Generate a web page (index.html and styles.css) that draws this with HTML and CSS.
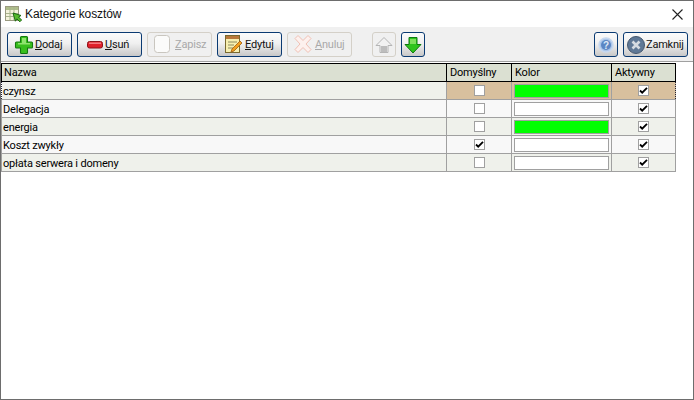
FILE: index.html
```html
<!DOCTYPE html>
<html lang="pl">
<head>
<meta charset="utf-8">
<title>Kategorie kosztów</title>
<link rel="stylesheet" href="styles.css">
</head>
<body>
<div class="window">
  <header class="titlebar">
    <svg class="app-icon" width="18" height="18" viewBox="0 0 18 18">
      <rect x="0.500" y="1.500" width="13" height="14" fill="#f4f2dc" stroke="#9a9a80"/>
      <rect x="1" y="2" width="12" height="3" fill="#aebd8a"/>
      <path d="M1 8.500h12M1 11.500h12M5 2v13M9 2v13" stroke="#a8b48e" fill="none"/>
      <path d="M8 8l8 2.500-2.400 1.500 3 3-1.800 1.800-3-3-1.400 2.400z" fill="#56bb2c" stroke="#1c6a12"/>
    </svg>
    <span class="title">Kategorie kosztów</span>
    <svg class="close" width="11" height="11" viewBox="0 0 11 11"><path d="M.500.500l10 10M10.500.500l-10 10" stroke="#222" stroke-width="1.100" fill="none"/></svg>
  </header>
  <div class="toolbar">
    <button class="btn wide"><svg width="22" height="22" viewBox="0 0 22 22"><path d="M8.500 2.500h5a1 1 0 0 1 1 1v4.500h4a1 1 0 0 1 1 1v4a1 1 0 0 1-1 1h-4v4.500a1 1 0 0 1-1 1h-5a1 1 0 0 1-1-1V14h-4a1 1 0 0 1-1-1V9a1 1 0 0 1 1-1h4V3.500a1 1 0 0 1 1-1z" fill="#38bf1d" stroke="#14780f" stroke-width="1.100"/><path d="M9 4h4v5H9zM5 9h12v1.500H5z" fill="#8fe36f"/></svg><span class="label"><u>D</u>odaj</span></button>
    <button class="btn wide"><svg width="22" height="22" viewBox="0 0 22 22"><rect x="4.500" y="7.500" width="15" height="6.500" rx="2" fill="#e0202a" stroke="#8e1218"/><rect x="6" y="8.500" width="12" height="1.500" fill="#f47a80"/></svg><span class="label"><u>U</u>suń</span></button>
    <button class="btn wide off"><svg width="22" height="22" viewBox="0 0 22 22"><rect x="1.500" y="1.500" width="15" height="17" rx="3" fill="#fbfbfa" stroke="#c9c6bf"/></svg><span class="label"><u>Z</u>apisz</span></button>
    <button class="btn wide"><svg width="22" height="22" viewBox="0 0 22 22"><rect x="2.500" y="1.500" width="14" height="17" fill="#f7efb0" stroke="#7a6a30"/><rect x="3" y="2" width="13" height="3" fill="#b9793c"/><path d="M5 8h9M5 11h6M5 14h5" stroke="#8a8a60"/><path d="M9 15l8-8 2 2-8 8-3 1z" fill="#f0a020" stroke="#a05a10" stroke-width=".8"/></svg><span class="label"><u>E</u>dytuj</span></button>
    <button class="btn wide off"><svg width="22" height="22" viewBox="0 0 22 22"><path d="M5 1.500l5 5 5-5 3 3-5 5.500 5 5.500-3 3-5-5-5 5-3-3 5-5.500-5-5.500z" fill="#fdf1ee" stroke="#f0c0b4"/></svg><span class="label"><u>A</u>nuluj</span></button>
    <div class="arrows">
      <button class="btn square off"><svg width="20" height="20" viewBox="0 0 20 20"><path d="M10 2.500l8 8h-4v7H6v-7H2z" fill="#f2f2f2" stroke="#b4b4b4"/><path d="M7 11h6v6H7z" fill="#bdbdbd"/></svg></button>
      <button class="btn square"><svg width="20" height="20" viewBox="0 0 20 20"><path d="M6 2.500h8v7h4l-8 8.500-8-8.500h4z" fill="#2fc41c" stroke="#0f7a10"/><path d="M7 4h6v5H7z" fill="#7fe05c"/></svg></button>
    </div>
    <div class="right">
      <button class="btn square"><svg width="20" height="20" viewBox="0 0 20 20"><circle cx="10" cy="10" r="7" fill="#a9c4e8" stroke="#c7d8ef" stroke-width="1.500"/><circle cx="10" cy="10" r="5" fill="#5b86c4"/><text x="10" y="13.500" class="help-mark">?</text></svg></button>
      <button class="btn wide close-btn"><svg width="20" height="20" viewBox="0 0 20 20"><circle cx="10" cy="10" r="8.500" fill="#5f7896" stroke="#46586e"/><path d="M6.500 6.500l7 7M13.500 6.500l-7 7" stroke="#d5dbe2" stroke-width="2.600"/></svg><span class="label">Zamknij</span></button>
    </div>
  </div>
  <table class="grid">
    <colgroup><col class="c-name"><col class="c-def"><col class="c-color"><col class="c-act"></colgroup>
    <thead><tr><th class="th-name">Nazwa</th><th>Domyślny</th><th>Kolor</th><th>Aktywny</th></tr></thead>
    <tbody>
      <tr class="alt current"><td class="name">czynsz</td><td class="mid"><span class="check"></span></td><td class="swatch-cell"><span class="swatch green"></span></td><td class="mid"><span class="check on"><svg width="9" height="9" viewBox="0 0 9 9"><path d="M1 4.500l2.200 2.200L8 1.800" class="tick"/></svg></span></td></tr>
      <tr><td class="name">Delegacja</td><td class="mid"><span class="check"></span></td><td class="swatch-cell"><span class="swatch"></span></td><td class="mid"><span class="check on"><svg width="9" height="9" viewBox="0 0 9 9"><path d="M1 4.500l2.200 2.200L8 1.800" class="tick"/></svg></span></td></tr>
      <tr class="alt"><td class="name">energia</td><td class="mid"><span class="check"></span></td><td class="swatch-cell"><span class="swatch green"></span></td><td class="mid"><span class="check on"><svg width="9" height="9" viewBox="0 0 9 9"><path d="M1 4.500l2.200 2.200L8 1.800" class="tick"/></svg></span></td></tr>
      <tr><td class="name">Koszt zwykły</td><td class="mid"><span class="check on"><svg width="9" height="9" viewBox="0 0 9 9"><path d="M1 4.500l2.200 2.200L8 1.800" class="tick"/></svg></span></td><td class="swatch-cell"><span class="swatch"></span></td><td class="mid"><span class="check on"><svg width="9" height="9" viewBox="0 0 9 9"><path d="M1 4.500l2.200 2.200L8 1.800" class="tick"/></svg></span></td></tr>
      <tr class="alt"><td class="name">opłata serwera i domeny</td><td class="mid"><span class="check"></span></td><td class="swatch-cell"><span class="swatch"></span></td><td class="mid"><span class="check on"><svg width="9" height="9" viewBox="0 0 9 9"><path d="M1 4.500l2.200 2.200L8 1.800" class="tick"/></svg></span></td></tr>
    </tbody>
  </table>
</div>
</body>
</html>
```
FILE: styles.css
```css
* { box-sizing: border-box; }
html, body { margin: 0; padding: 0; }
body { width: 694px; height: 400px; overflow: hidden; font-family: Roboto, "Liberation Sans", Arial, sans-serif; font-size: 11px; letter-spacing: -0.200px; color: #000; background: #fff; }
.window { width: 694px; height: 400px; border: 1px solid #6d6d6d; background: #fff; }
.titlebar { height: 26px; display: flex; align-items: center; padding: 0 10px 0 4px; }
.app-icon { margin-right: 2px; flex: none; }
.title { font-family: "Liberation Sans", Arial, sans-serif; font-size: 12px; letter-spacing: -0.100px; flex: 1; color: #111; }
.toolbar { height: 35px; background: #f0f0f0; border-bottom: 1px solid #a0a0a0; display: flex; align-items: center; padding: 1px 5px 0 6px; gap: 5px; }
.btn { height: 25px; padding: 0; border: 1px solid #0a3a72; border-radius: 3px; background: linear-gradient(#fbfbfb, #f0f0f0 45%, #c8c8c8); display: flex; align-items: center; justify-content: center; font: inherit; letter-spacing: inherit; color: #111; }
.btn svg { flex: none; }
.wide { width: 65px; gap: 0; justify-content: flex-start; padding-left: 5px; }
.close-btn { padding-left: 2px; }
.square { width: 24px; }
.off { border-color: #d4d0c8; background: #f0f0f0; color: #a9a9a9; }
.arrows { display: flex; gap: 5px; margin-left: 15px; }
.right { display: flex; gap: 5px; margin-left: auto; }
.help-mark { font: bold 10px "Liberation Sans", sans-serif; fill: #dfe9f6; text-anchor: middle; }
.grid { table-layout: fixed; width: 674px; border-collapse: collapse; margin-top: 1px; }
.c-name { width: 445px; }
.c-def { width: 65px; }
.c-color { width: 100px; }
.c-act { width: 64px; }
th { height: 18px; background: #dbe0d2; border: 1px solid #000; padding: 0 0 0 3px; font-weight: normal; text-align: left; }
th.th-name { padding-left: 2px; }
td { height: 18px; padding: 0; border: 1px solid #a0a0a0; background: #f8f8f8; }
tr.alt td { background: #eff1eb; }
td.name { padding: 1px 0 0 1px; }
.mid { text-align: center; line-height: 0; }
.swatch-cell { padding: 0 2px; line-height: 0; }
.check { display: inline-flex; align-items: center; justify-content: center; width: 11px; height: 11px; border: 1px solid #a0a0a0; background: #fff; vertical-align: middle; }
.tick { fill: none; stroke: #000; stroke-width: 1.800; }
.swatch { display: block; height: 14px; border: 1px solid #a0a0a0; background: #fff; }
.swatch.green { background: #00ff00; }
tr.current td { background: #d8c09e; border-top: 1px dotted #223; border-bottom: 1px dotted #223; }
tr.current .name { background: #eff1eb; border-left: 1px dotted #223; }
tr.current td:last-child { border-right: 1px dotted #223; }
```
